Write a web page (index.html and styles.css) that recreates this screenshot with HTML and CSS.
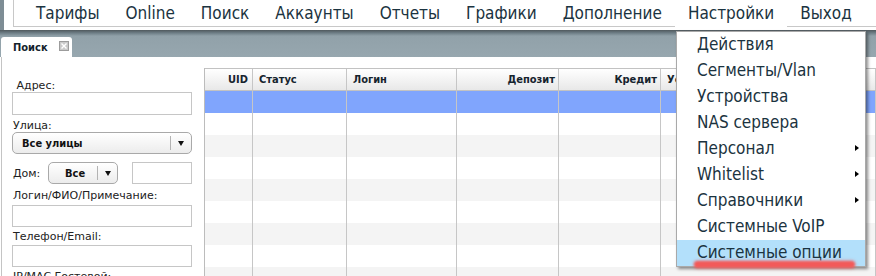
FILE: index.html
```html
<!DOCTYPE html>
<html lang="ru">
<head>
<meta charset="utf-8">
<title>Поиск</title>
<link rel="stylesheet" href="styles.css">
</head>
<body>
<div class="page">
  <header class="top">
    <nav class="nav">
      <span class="nav-item">Тарифы</span>
      <span class="nav-item">Online</span>
      <span class="nav-item">Поиск</span>
      <span class="nav-item">Аккаунты</span>
      <span class="nav-item">Отчеты</span>
      <span class="nav-item">Графики</span>
      <span class="nav-item">Дополнение</span>
      <span class="nav-item active">Настройки</span>
      <span class="nav-item">Выход</span>
    </nav>
  </header>

  <div class="tabbar">
    <div class="tab">
      <span class="tab-title">Поиск</span>
      <svg class="tab-close" width="10" height="10" viewBox="0 0 10 10">
        <rect x="0.5" y="0.5" width="9" height="9" fill="#c9c9c9" stroke="#9c9c9c"/>
        <path d="M2.5 2.5 L7.5 7.5 M7.5 2.5 L2.5 7.5" stroke="#fff" stroke-width="1.4"/>
      </svg>
    </div>
  </div>

  <main class="content">
    <form class="search">
      <label class="lbl">&nbsp;Адрес:</label>
      <input class="field" type="text">
      <label class="lbl lbl-street">Улица:</label>
      <div class="select">
        <span class="select-text">Все улицы</span>
        <span class="select-div"></span>
        <span class="select-arrow"><i class="tri"></i></span>
      </div>
      <div class="dom-row">
        <span class="dom-lbl">Дом:</span>
        <div class="select select-small">
          <span class="select-text">Все</span>
          <span class="select-div"></span>
          <span class="select-arrow"><i class="tri"></i></span>
        </div>
        <input class="field field-house" type="text">
      </div>
      <label class="lbl lbl-login">Логин/ФИО/Примечание:</label>
      <input class="field field-login" type="text">
      <label class="lbl lbl-phone">Телефон/Email:</label>
      <input class="field field-phone" type="text">
      <label class="lbl lbl-ip">IP/MAC Гостевой:</label>
    </form>

    <div class="grid">
      <div class="row head">
        <div class="c c-uid r">UID</div>
        <div class="c c-status">Статус</div>
        <div class="c c-login">Логин</div>
        <div class="c c-dep r">Депозит</div>
        <div class="c c-cred r">Кредит</div>
        <div class="c c-last">Услуги</div>
      </div>
      <div class="row sel"><div class="c c-uid"></div><div class="c c-status"></div><div class="c c-login"></div><div class="c c-dep"></div><div class="c c-cred"></div><div class="c c-last"></div></div>
      <div class="row"><div class="c c-uid"></div><div class="c c-status"></div><div class="c c-login"></div><div class="c c-dep"></div><div class="c c-cred"></div><div class="c c-last"></div></div>
      <div class="row alt"><div class="c c-uid"></div><div class="c c-status"></div><div class="c c-login"></div><div class="c c-dep"></div><div class="c c-cred"></div><div class="c c-last"></div></div>
      <div class="row"><div class="c c-uid"></div><div class="c c-status"></div><div class="c c-login"></div><div class="c c-dep"></div><div class="c c-cred"></div><div class="c c-last"></div></div>
      <div class="row alt"><div class="c c-uid"></div><div class="c c-status"></div><div class="c c-login"></div><div class="c c-dep"></div><div class="c c-cred"></div><div class="c c-last"></div></div>
      <div class="row"><div class="c c-uid"></div><div class="c c-status"></div><div class="c c-login"></div><div class="c c-dep"></div><div class="c c-cred"></div><div class="c c-last"></div></div>
      <div class="row alt"><div class="c c-uid"></div><div class="c c-status"></div><div class="c c-login"></div><div class="c c-dep"></div><div class="c c-cred"></div><div class="c c-last"></div></div>
      <div class="row"><div class="c c-uid"></div><div class="c c-status"></div><div class="c c-login"></div><div class="c c-dep"></div><div class="c c-cred"></div><div class="c c-last"></div></div>
      <div class="row alt"><div class="c c-uid"></div><div class="c c-status"></div><div class="c c-login"></div><div class="c c-dep"></div><div class="c c-cred"></div><div class="c c-last"></div></div>
    </div>
  </main>

  <ul class="dropdown">
    <li class="dd-item">Действия</li>
    <li class="dd-item">Сегменты/Vlan</li>
    <li class="dd-item">Устройства</li>
    <li class="dd-item">NAS сервера</li>
    <li class="dd-item sub">Персонал</li>
    <li class="dd-item sub">Whitelist</li>
    <li class="dd-item sub">Справочники</li>
    <li class="dd-item">Системные VoIP</li>
    <li class="dd-item hover">Системные опции</li>
  </ul>
  <div class="mark"></div>
</div>
</body>
</html>
```

FILE: styles.css
```css
html, body {
  margin: 0;
  padding: 0;
  background: #fff;
}

.page {
  position: relative;
  width: 876px;
  height: 276px;
  overflow: hidden;
  background: #fff;
}

/* ---------- top navigation ---------- */
.top {
  height: 30px;
  box-sizing: border-box;
  background: #fff;
  border-left: 4px solid #7e8d95;
}

.nav {
  display: flex;
  align-items: flex-start;
  margin-left: 9px;
  height: 26px;
  padding-left: 9px;
  border-left: 1px solid #c8c8c8;
  border-bottom: 1px solid #c8c8c8;
  font-family: "DejaVu Sans Condensed", "DejaVu Sans", sans-serif;
  font-size: 17px;
  line-height: 26px;
  color: #1b3340;
  white-space: nowrap;
}

.nav-item {
  padding: 0 13px;
}

.nav-item.active {
  height: 27px;
  background: #fff;
}

/* ---------- tab bar ---------- */
.tabbar {
  height: 27px;
  box-sizing: border-box;
  padding: 7px 0 0 1px;
  background: linear-gradient(#4f585d 0px, #6e7e86 3px, #91a1a9 6px, #97a7af 27px);
}

.tab {
  display: flex;
  align-items: center;
  width: 71px;
  height: 20px;
  box-sizing: border-box;
  padding-left: 12px;
  background: #fff;
  border-radius: 3px 3px 0 0;
}

.tab-title {
  font-family: "DejaVu Sans Condensed", "DejaVu Sans", sans-serif;
  font-weight: bold;
  font-size: 11px;
  color: #13222c;
}

.tab-close {
  display: block;
  margin-left: auto;
  margin-right: 3px;
  margin-top: -2px;
}

/* ---------- content ---------- */
.content {
  display: flex;
  height: 219px;
  margin-left: 1px;
  border-left: 1px solid #c4c4c4;
}

.search {
  flex: none;
  width: 202px;
  box-sizing: border-box;
  padding: 22px 0 0 10px;
  margin: 0;
  font-family: "DejaVu Sans", sans-serif;
  font-size: 11px;
  line-height: 13px;
  color: #222;
}

.lbl {
  display: block;
  height: 13px;
  padding-left: 1px;
  white-space: nowrap;
}

.lbl-street { margin-top: 4px; }
.lbl-login { margin-top: 5px; }
.lbl-phone { margin-top: 3px; }
.lbl-ip { margin-top: 3px; }

.field {
  display: block;
  width: 180px;
  height: 23px;
  box-sizing: border-box;
  margin: 0;
  padding: 0;
  border: 1px solid #c6c6c6;
  background: #fff;
  outline: none;
}

.field-login { margin-top: 3px; height: 22px; }
.field-phone { margin-top: 2px; height: 22px; }

.select {
  display: flex;
  align-items: center;
  width: 180px;
  height: 22px;
  box-sizing: border-box;
  border: 1px solid #a9a9a9;
  border-radius: 5px;
  background: linear-gradient(#ffffff, #ececec);
  font-family: "DejaVu Sans Condensed", "DejaVu Sans", sans-serif;
  font-weight: bold;
  font-size: 11px;
  color: #111;
}

.select-text {
  flex: 1;
  padding-left: 9px;
}

.select-div {
  width: 1px;
  height: 14px;
  background: #b3b3b3;
}

.select-arrow {
  display: flex;
  justify-content: center;
  align-items: center;
  width: 20px;
}

.tri {
  display: block;
  width: 0;
  height: 0;
  border-left: 3.5px solid transparent;
  border-right: 3.5px solid transparent;
  border-top: 5px solid #111;
}

.dom-row {
  display: flex;
  align-items: center;
  height: 22px;
  margin-top: 8px;
}

.dom-lbl {
  width: 36px;
  box-sizing: border-box;
  padding-left: 1px;
}

.select-small {
  width: 70px;
}

.select-small .select-text {
  flex: none;
  width: 32px;
  padding-left: 16px;
}

.select-small .select-arrow {
  width: 19px;
}

.field-house {
  width: 60px;
  height: 22px;
  margin-left: 14px;
}

/* ---------- grid ---------- */
.grid {
  flex: 1;
  margin-top: 11px;
  overflow: hidden;
  border-left: 1px solid #bcbcbc;
  font-family: "DejaVu Sans Condensed", "DejaVu Sans", sans-serif;
  font-weight: bold;
  font-size: 11px;
  color: #16242e;
}

.row {
  display: flex;
  height: 22px;
  background: #fff;
}

.row.alt { background: #f4f4f4; }
.row.sel { background: #80a5fd; }

.row.head {
  height: 23px;
  box-sizing: border-box;
  border-top: 1px solid #c2c2c2;
  border-bottom: 1px solid #c2c2c2;
  background: linear-gradient(#ffffff, #e8e8e8);
  line-height: 21px;
}

.c {
  flex: none;
  box-sizing: border-box;
  border-right: 1px solid #c6c6c6;
  padding: 0 6px;
  white-space: nowrap;
  overflow: hidden;
}

.c.r {
  text-align: right;
  padding: 0 3px 0 0;
}

.c-uid { width: 48px; }
.c-uid.r { padding-right: 4px; }
.c-status { width: 94px; }
.c-login { width: 110px; }
.c-dep { width: 102px; }
.c-cred { width: 102px; }
.c-last { flex: 1; }

/* ---------- dropdown ---------- */
.dropdown {
  position: absolute;
  left: 676px;
  top: 31px;
  z-index: 5;
  width: 190px;
  box-sizing: border-box;
  margin: 0;
  padding: 0;
  list-style: none;
  background: #fff;
  border: 1px solid #a9a9a9;
  box-shadow: 2px 2px 3px rgba(0, 0, 0, 0.45);
  font-family: "DejaVu Sans Condensed", "DejaVu Sans", sans-serif;
  font-size: 17px;
  line-height: 24px;
  color: #1b3340;
}

.dd-item {
  position: relative;
  height: 26px;
  padding-left: 20px;
  white-space: nowrap;
}

.dd-item.sub::after {
  content: "";
  position: absolute;
  right: 6px;
  top: 9px;
  border-top: 3.5px solid transparent;
  border-bottom: 3.5px solid transparent;
  border-left: 4px solid #000;
}

.dd-item.hover {
  background: #b3e0fb;
}

.mark {
  position: absolute;
  left: 694px;
  top: 261px;
  z-index: 6;
  width: 161px;
  height: 7px;
  border-radius: 4px;
  background: #f25a5a;
  box-shadow: 0 0 3px rgba(242, 90, 90, 0.8);
  filter: blur(0.8px);
}
```
